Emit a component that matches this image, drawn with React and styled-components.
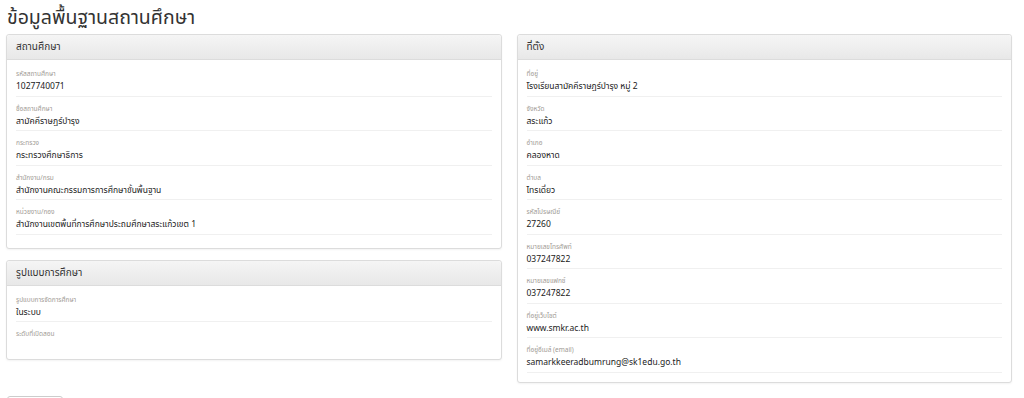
import React from 'react';
import styled, { createGlobalStyle } from 'styled-components';

const GlobalStyle = createGlobalStyle`
  body {
    margin: 0;
    background: #fff;
    font-family: "Noto Sans Thai", "Noto Sans", "DejaVu Sans", sans-serif;
    color: #333;
  }
`;

const Page = styled.div`
  padding: 0 12px 0 6px;
  width: 1024px;
  height: 398px;
  box-sizing: border-box;
  overflow: hidden;
`;

const Title = styled.h1`
  margin: 0;
  padding: 6px 0 0 1px;
  height: 28px;
  font-size: 19.5px;
  font-weight: 400;
  line-height: 24px;
  color: #333;
`;

const Columns = styled.div`
  display: grid;
  grid-template-columns: 1fr 1fr;
  column-gap: 15px;
  align-items: start;
`;

const Column = styled.div`
  display: flex;
  flex-direction: column;
  gap: 11px;
`;

const Panel = styled.section`
  border: 1px solid #dcdcdc;
  border-radius: 3px;
  background: #fff;
  box-shadow: 0 1px 2px rgba(0, 0, 0, 0.05);
`;

const PanelHeading = styled.div`
  height: 24px;
  padding: 0 9px;
  display: flex;
  align-items: center;
  font-size: 10px;
  color: #333;
  background: linear-gradient(#f5f5f5, #e8e8e8);
  border-bottom: 1px solid #dcdcdc;
  border-radius: 3px 3px 0 0;
`;

const PanelBody = styled.div`
  padding: 2px 9px ${(p) => p.$bottom}px;
`;

const Field = styled.div`
  padding: 7px 0 1.5px;
  border-bottom: 1px solid #f0f0f0;
`;

const Label = styled.div`
  font-size: 6.5px;
  line-height: 11px;
  color: #a09a94;
`;

const Value = styled.div`
  font-size: 8.5px;
  line-height: 14px;
  min-height: 14px;
  color: #222;
`;

const Button = styled.div`
  margin-top: 25px;
  width: 54px;
  height: 24px;
  margin-left: 1px;
  border: 1px solid #ccc;
  border-radius: 3px;
  background: linear-gradient(#fff, #f0f0f0);
`;

const school = [
  ['รหัสสถานศึกษา', '1027740071'],
  ['ชื่อสถานศึกษา', 'สามัคคีราษฎร์บำรุง'],
  ['กระทรวง', 'กระทรวงศึกษาธิการ'],
  ['สำนักงาน/กรม', 'สำนักงานคณะกรรมการการศึกษาขั้นพื้นฐาน'],
  ['หน่วยงาน/กอง', 'สำนักงานเขตพื้นที่การศึกษาประถมศึกษาสระแก้วเขต 1'],
];

const model = [
  ['รูปแบบการจัดการศึกษา', 'ในระบบ'],
  ['ระดับที่เปิดสอน', ''],
];

const location = [
  ['ที่อยู่', 'โรงเรียนสามัคคีราษฎร์บำรุง หมู่ 2'],
  ['จังหวัด', 'สระแก้ว'],
  ['อำเภอ', 'คลองหาด'],
  ['ตำบล', 'ไทรเดี่ยว'],
  ['รหัสไปรษณีย์', '27260'],
  ['หมายเลขโทรศัพท์', '037247822'],
  ['หมายเลขแฟกซ์', '037247822'],
  ['ที่อยู่เว็บไซต์', 'www.smkr.ac.th'],
  ['ที่อยู่อีเมล์ (email)', 'samarkkeeradbumrung@sk1edu.go.th'],
];

const Fields = ({ rows, plain }) =>
  rows.map(([label, value], i) => (
    <Field key={label} style={plain && i === rows.length - 1 ? { borderBottom: 'none' } : undefined}>
      <Label>{label}</Label>
      <Value>{value}</Value>
    </Field>
  ));

const App = () => (
  <>
    <GlobalStyle />
    <Page>
      <Title>ข้อมูลพื้นฐานสถานศึกษา</Title>
      <Columns>
        <Column>
          <Panel>
            <PanelHeading>สถานศึกษา</PanelHeading>
            <PanelBody $bottom={13}>
              <Fields rows={school} />
            </PanelBody>
          </Panel>
          <Panel>
            <PanelHeading>รูปแบบการศึกษา</PanelHeading>
            <PanelBody $bottom={3}>
              <Fields rows={model} plain />
            </PanelBody>
          </Panel>
          <Button />
        </Column>
        <Column>
          <Panel>
            <PanelHeading>ที่ตั้ง</PanelHeading>
            <PanelBody $bottom={9}>
              <Fields rows={location} />
            </PanelBody>
          </Panel>
        </Column>
      </Columns>
    </Page>
  </>
);

export default App;
